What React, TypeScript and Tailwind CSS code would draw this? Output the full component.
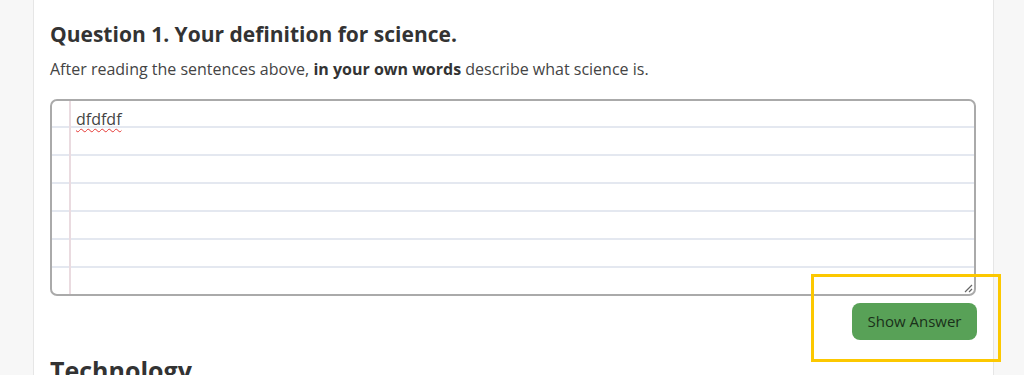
import React from "react";

export default function App() {
  const rows = [0, 1, 2, 3, 4, 5, 6];
  return (
    <div
      className="relative flex h-[375px] w-[1024px] overflow-hidden bg-[#f7f7f7]"
      style={{ fontFamily: '"Open Sans", "Liberation Sans", sans-serif' }}
    >
      <div className="w-[33px] shrink-0" />
      <div className="flex w-[961px] shrink-0 flex-col border-x border-[#e6e6e6] bg-white pl-[16px] pr-[16px] pt-[19px]">
        <h2 className="shrink-0 text-[21px] font-bold leading-[30px] text-[#333]">
          Question 1. Your definition for science.
        </h2>
        <p className="mt-[9px] shrink-0 text-[16px] leading-[22px] text-[#444]">
          After reading the sentences above, <b className="font-bold text-[#333]">in your own words</b> describe
          what science is.
        </p>
        <div className="relative mt-[19px] h-[197px] w-[926px] shrink-0 overflow-hidden rounded-[7px] border-2 border-[#aaaaaa] bg-white">
          <div className="absolute bottom-0 left-[17px] top-0 w-[2px] bg-[#eadbe0]" />
          <div className="flex flex-col">
            {rows.map((r) => (
              <div
                key={r}
                className={
                  r === 0
                    ? "h-[27px] shrink-0 border-b-2 border-[#e4e8f0] pl-[24px] pt-[9px]"
                    : r < 6
                    ? "h-[28px] shrink-0 border-b-2 border-[#e4e8f0]"
                    : "h-[28px] shrink-0"
                }
              >
                {r === 0 && (
                  <span
                    className="block text-[16px] leading-[18px] text-[#444]"
                    style={{
                      textDecorationLine: "underline",
                      textDecorationStyle: "wavy",
                      textDecorationColor: "#e53935",
                      textDecorationThickness: "1px",
                      textUnderlineOffset: "3px",
                    }}
                  >
                    dfdfdf
                  </span>
                )}
              </div>
            ))}
          </div>
          <svg
            className="absolute bottom-[1px] right-[1px]"
            width="10"
            height="10"
            viewBox="0 0 10 10"
          >
            <path d="M9 2 L2 9 M9 6 L6 9" stroke="#666" strokeWidth="1.2" />
          </svg>
        </div>
        <div className="mt-[7px] flex shrink-0 justify-end">
          <button className="h-[37px] w-[125px] rounded-[8px] bg-[#58a157] text-[15px] text-[#1a301a]">
            Show Answer
          </button>
        </div>
        <h2 className="mt-[13px] shrink-0 text-[25px] font-bold leading-[34px] text-[#333]">Technology</h2>
      </div>
      <div className="flex-1" />
      <div className="pointer-events-none absolute left-[811px] top-[274px] h-[88px] w-[190px] border-[3px] border-[#fcc800]" />
    </div>
  );
}
